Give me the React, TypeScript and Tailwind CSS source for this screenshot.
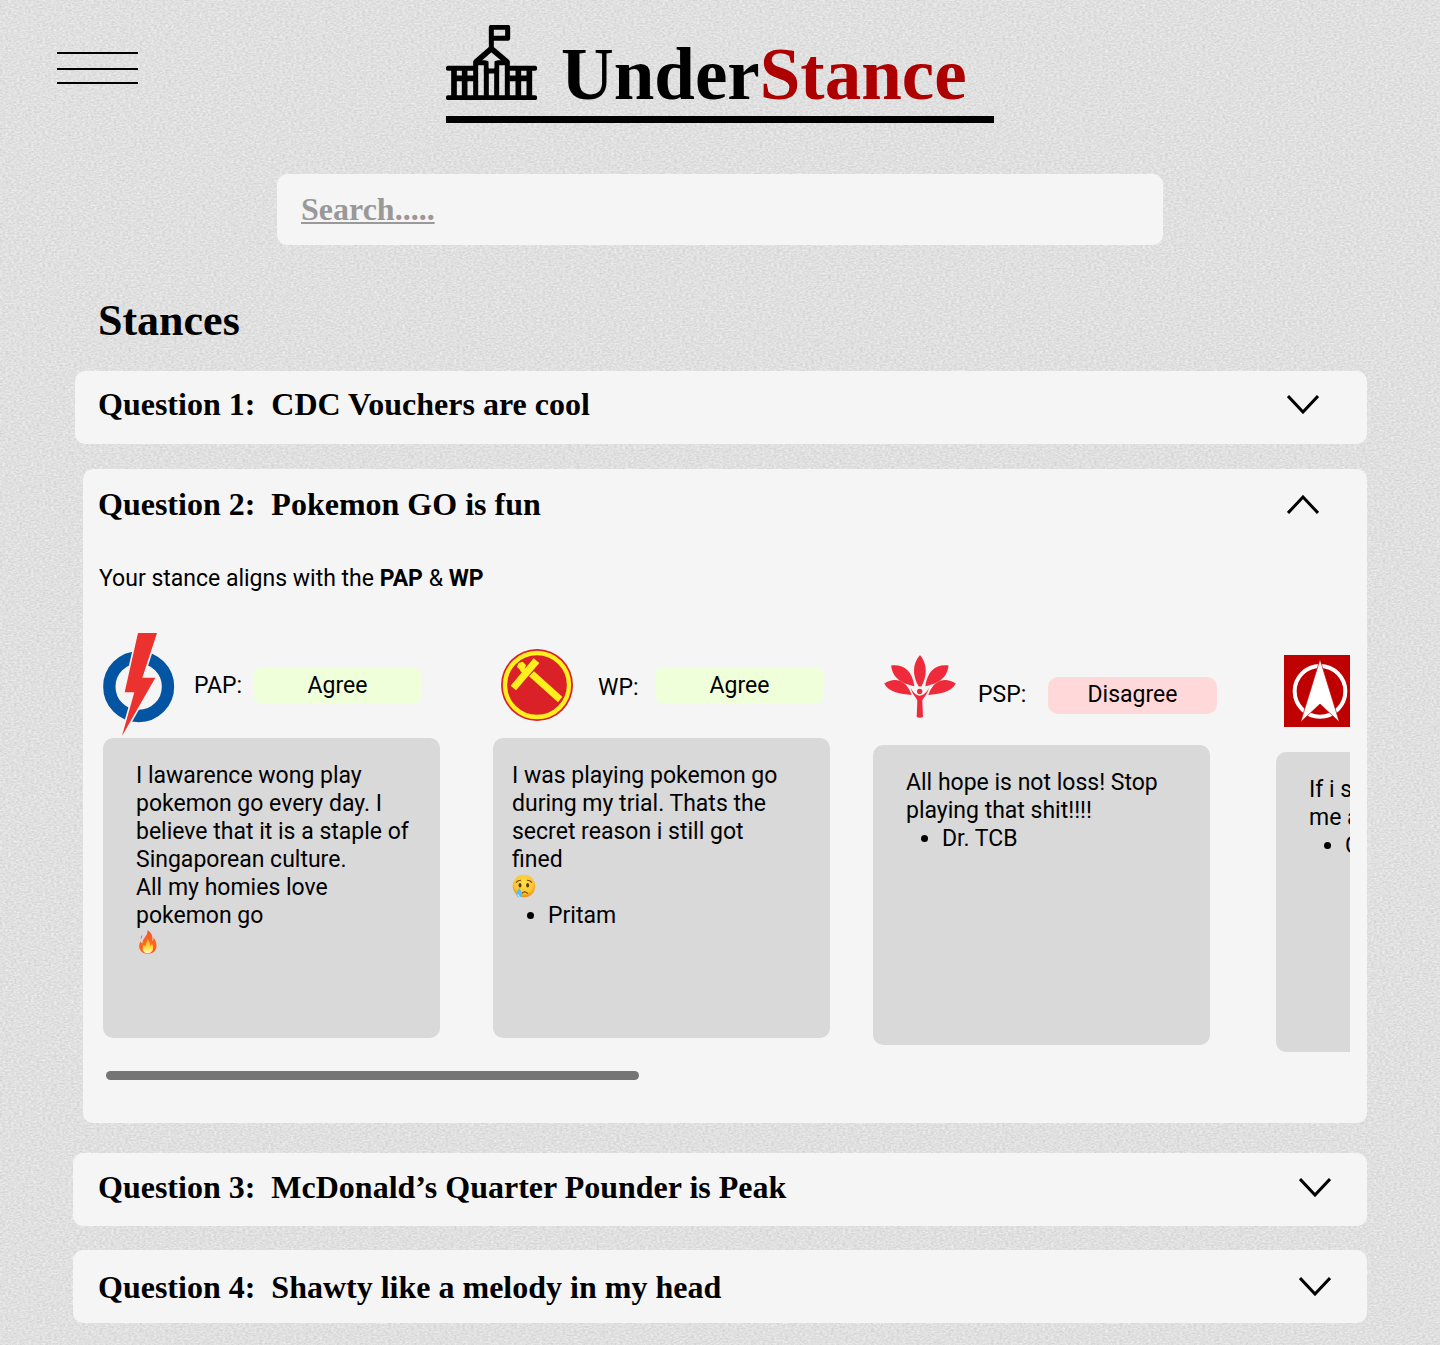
import React, { useState } from "react";

const serif = "font-['Liberation_Serif',serif] font-bold";

function PaperTexture() {
  return (
    <svg className="pointer-events-none absolute inset-0 -z-10 h-full w-full" aria-hidden="true">
      <filter id="weave" x="0" y="0" width="100%" height="100%" colorInterpolationFilters="sRGB">
        <feTurbulence type="fractalNoise" baseFrequency="0.35 0.6" numOctaves="3" seed="4" result="n" />
        <feColorMatrix
          in="n"
          type="matrix"
          values="0.16 0 0 0 0.797  0.16 0 0 0 0.797  0.16 0 0 0 0.797  0 0 0 0 1"
        />
      </filter>
      <rect width="100%" height="100%" filter="url(#weave)" />
    </svg>
  );
}

function ParliamentIcon() {
  return (
    <svg viewBox="48 30 273 225" className="h-[75px] w-[91px]" fill="none" stroke="#000" strokeWidth="15" strokeLinecap="round" strokeLinejoin="round" aria-hidden="true">
      <path d="M184 98V37H233V70H190" />
      <path d="M139 140L184 101L230 140" strokeWidth="17" />
      <path d="M55 160H132M238 160H314M55 248H314" />
      <path d="M72 165V243M104 165V243M265 165V243M298 165V243M78 190H132M238 190H292" strokeLinecap="butt" strokeWidth="17" />
      <path d="M137 143V243M169 143V243M200 143V243M232 143V243M137 143H169M200 143H232" />
      <path d="M169 168H200" strokeWidth="15" />
      <path d="M166 136L184 117L203 136L193 138V158H176V138Z" fill="#e0e0e0" stroke="none" />
    </svg>
  );
}

function Chevron({ up }: { up?: boolean }) {
  return (
    <svg viewBox="0 0 32 19" className="h-[19px] w-8" fill="none" stroke="#000" strokeWidth="3" aria-hidden="true">
      <path d={up ? "M1 18L16 2L31 18" : "M1 1L16 17L31 1"} />
    </svg>
  );
}

function PapLogo() {
  return (
    <svg viewBox="40 24 216 309" className="h-[103px] w-[72px]" role="img" aria-label="PAP logo">
      <circle cx="147" cy="185" r="88" fill="none" stroke="#0354a3" strokeWidth="37" />
      <path d="M145 24H202L158 158H197L97 333L134 202H105Z" fill="#ec322f" stroke="#f5f5f5" strokeWidth="10" />
      <path d="M145 24H202L158 158H197L97 333L134 202H105Z" fill="#ec322f" />
    </svg>
  );
}

function WpLogo() {
  return (
    <svg viewBox="33 27 216 216" className="size-[72px]" role="img" aria-label="WP logo">
      <circle cx="141" cy="135" r="108" fill="#da2128" />
      <circle cx="141" cy="135" r="96" fill="none" stroke="#fff01f" strokeWidth="13" />
      <g fill="#ffef1c">
        <path d="M131 55L148 69L78 151L62 137Z" />
        <path d="M132 94L217 170L204 187L117 109Z" />
        <path d="M86 69L98 65L108 75L104 88L91 91L81 80Z" />
        <path d="M98 82L112 94L103 104L90 92Z" />
      </g>
    </svg>
  );
}

function PspLogo() {
  return (
    <svg viewBox="42 45 216 190" className="h-[63px] w-[72px]" fill="#ee2a3b" role="img" aria-label="PSP logo">
      <path d="M150 45C126 72 127 108 146 140H154C172 108 173 72 150 45Z" />
      <path d="M63 77C98 72 126 90 133 139C100 133 67 118 63 77Z" />
      <path d="M236 77C201 72 173 90 166 139C199 133 232 118 236 77Z" />
      <path d="M42 131C72 112 108 117 125 166C92 162 56 158 42 131Z" />
      <path d="M258 131C228 112 192 117 175 166C208 162 244 158 258 131Z" />
      <circle cx="149" cy="155" r="8" />
      <path d="M122 144C132 163 142 168 149 168C157 168 167 163 177 144C171 169 158 174 157 184L159 232Q149 237 140 232L142 184C141 174 128 169 122 144Z" />
    </svg>
  );
}

function SdpLogo() {
  return (
    <svg viewBox="162 45 216 216" className="size-[72px]" role="img" aria-label="SDP logo">
      <path d="M162 45H378V261H162Z" fill="#bf0000" />
      <circle cx="270" cy="154" r="76" fill="none" stroke="#fff" strokeWidth="12" />
      <path d="M270 58L328 246L270 192L212 246Z" fill="#fff" stroke="#bf0000" strokeWidth="2" />
    </svg>
  );
}

function CryEmoji() {
  return (
    <svg viewBox="0 0 64 66" className="h-6 w-6" role="img" aria-label="Crying face">
      <defs>
        <radialGradient id="face" cx="50%" cy="38%" r="62%">
          <stop offset="0" stopColor="#ffe34a" />
          <stop offset="0.7" stopColor="#fdc52c" />
          <stop offset="1" stopColor="#e88b17" />
        </radialGradient>
      </defs>
      <circle cx="32" cy="33" r="31" fill="url(#face)" />
      <ellipse cx="21" cy="31" rx="4" ry="6" fill="#5f3509" />
      <ellipse cx="42" cy="31" rx="4" ry="6" fill="#5f3509" />
      <path d="M11 23Q15 17 23 17M41 17Q49 17 53 23M26 53Q34 45 42 53" fill="none" stroke="#7a4610" strokeWidth="3" strokeLinecap="round" />
      <path d="M19 38C14 46 10 52 11 57C13 67 26 66 27 56C27 51 23 46 19 38Z" fill="#5bbdf5" />
      <path d="M15 56Q16 62 21 61" fill="none" stroke="#d8f3ff" strokeWidth="3" />
    </svg>
  );
}

function FireEmoji() {
  return (
    <svg viewBox="0 0 54 72" className="ml-[2px] h-6 w-5" role="img" aria-label="Fire">
      <defs>
        <linearGradient id="flame" x1="0" y1="0" x2="0" y2="1">
          <stop offset="0" stopColor="#f2512b" />
          <stop offset="0.55" stopColor="#fb6a1e" />
          <stop offset="1" stopColor="#fb5a1f" />
        </linearGradient>
        <linearGradient id="core" x1="0" y1="0" x2="0" y2="1">
          <stop offset="0" stopColor="#ffa628" />
          <stop offset="0.6" stopColor="#ffdc3e" />
          <stop offset="1" stopColor="#fffbd0" />
        </linearGradient>
      </defs>
      <path d="M25 0C38 7 42 19 40 32C44 30 44 26 43 22C56 37 56 58 43 67C36 73 16 73 8 65C-3 55 0 42 5 34C6 38 8 40 11 40C8 25 29 17 25 0Z" fill="url(#flame)" />
      <path d="M10 14Q4 20 5 29Q10 22 10 14Z" fill="#f2512b" />
      <path d="M25 27C33 34 32 41 34 48C37 46 38 43 38 40C46 52 43 69 27 70C10 70 8 54 15 44C16 47 18 49 20 49C18 41 26 36 25 27Z" fill="url(#core)" />
    </svg>
  );
}

function Pill({ agree }: { agree: boolean }) {
  return (
    <span className={`flex h-[37px] w-[169px] shrink-0 items-center justify-center rounded-[10px] ${agree ? "bg-[#eeffda]" : "bg-[#ffd9d9]"}`}>
      {agree ? "Agree" : "Disagree"}
    </span>
  );
}

function Quote({ className = "px-[33px]", children }: { className?: string; children: React.ReactNode }) {
  return (
    <blockquote className={`h-[300px] w-[337px] rounded-[10px] bg-[#d9d9d9] pt-6 whitespace-nowrap ${className}`}>
      {children}
    </blockquote>
  );
}

function QuestionHeader({ n, title, open, className, onToggle }: { n: number; title: string; open?: boolean; className: string; onToggle: () => void }) {
  return (
    <h2>
      <button type="button" aria-expanded={!!open} onClick={onToggle} className={`flex w-full items-center justify-between text-left text-[32px] leading-9 ${serif} ${className}`}>
        <span className="whitespace-pre-wrap">{`Question ${n}:  ${title}`}</span>
        <Chevron up={open} />
      </button>
    </h2>
  );
}

export default function App() {
  const [open, setOpen] = useState(true);
  const noop = () => {};
  return (
    <div className="relative isolate min-h-screen overflow-hidden bg-[#e0e0e0] pb-[22px] font-[Roboto,sans-serif] text-[23px] leading-7 text-black">
      <PaperTexture />
      <header className="grid grid-cols-[1fr_auto_1fr] items-start px-[57px]">
        <button type="button" aria-label="Menu" className="mt-[52px] flex w-[81px] flex-col">
          <span className="h-[2px] w-full bg-black" />
          <span className="mt-[14px] h-[2px] w-full bg-black" />
          <span className="mt-3 h-[2px] w-full bg-black" />
        </button>
        <a href="#home" className="flex w-[548px] items-end gap-6 border-b-[7px] border-black pt-[25px] pb-4">
          <ParliamentIcon />
          <span className={`-mb-4 text-[73px] leading-[82px] ${serif}`}>
            Under<span className="text-[#ad0000]">Stance</span>
          </span>
        </a>
      </header>

      <main className="px-[73px]">
        <input
          type="search"
          aria-label="Search"
          placeholder="Search....."
          className={`mx-auto mt-[51px] block h-[71px] w-full max-w-[886px] rounded-[10px] bg-[#f5f5f5] px-6 text-[32px] outline-none placeholder:text-[#999999] placeholder:underline placeholder:decoration-2 placeholder:underline-offset-2 ${serif}`}
        />
        <h1 className={`mt-[50px] pl-[25px] text-[44px] leading-[52px] ${serif}`}>Stances</h1>

        <section className="mt-6 ml-[2px] rounded-[10px] bg-[#f5f5f5]">
          <QuestionHeader n={1} title="CDC Vouchers are cool" className="h-[73px] pr-12 pb-[7px] pl-[23px]" onToggle={noop} />
        </section>

        <section className="mt-[25px] ml-[10px] rounded-[10px] bg-[#f5f5f5]">
          <QuestionHeader n={2} title="Pokemon GO is fun" open={open} className="h-[70px] pr-12 pl-[15px]" onToggle={() => setOpen(!open)} />
          {open && (
            <div className="pr-[17px] pb-[43px] pl-5">
              <p className="-ml-1 pt-[26px]">
                Your stance aligns with the <b>PAP</b> &amp; <b>WP</b>
              </p>
              <div className="mt-10 flex items-start overflow-hidden">
                <article className="mr-[53px] w-[337px] shrink-0">
                  <header className="flex h-[105px] items-center">
                    <div className="mb-[2px]"><PapLogo /></div>
                    <h3 className="ml-[19px] w-[59px]">PAP:</h3>
                    <Pill agree />
                  </header>
                  <Quote>
                    <p>
                      I lawarence wong play<br />pokemon go every day. I<br />believe that it is a staple of<br />Singaporean culture.<br />All my homies love<br />pokemon go
                    </p>
                    <FireEmoji />
                  </Quote>
                </article>
                <article className="mr-[43px] w-[337px] shrink-0">
                  <header className="flex h-[105px] items-center pl-2">
                    <div className="mb-[2px]"><WpLogo /></div>
                    <h3 className="ml-[25px] w-[57px] pt-1">WP:</h3>
                    <Pill agree />
                  </header>
                  <Quote className="px-[19px]">
                    <p>
                      I was playing pokemon go<br />during my trial. Thats the<br />secret reason i still got<br />fined
                    </p>
                    <div className="h-7"><CryEmoji /></div>
                    <ul className="list-disc pl-9"><li>Pritam</li></ul>
                  </Quote>
                </article>
                <article className="mr-[66px] w-[337px] shrink-0">
                  <header className="flex h-28 items-center pt-3 pl-[11px]">
                    <div className="mb-[18px]"><PspLogo /></div>
                    <h3 className="ml-[22px] w-[70px] shrink-0">PSP:</h3>
                    <Pill agree={false} />
                  </header>
                  <Quote>
                    <p>All hope is not loss! Stop<br />playing that shit!!!!</p>
                    <ul className="list-disc pl-9"><li>Dr. TCB</li></ul>
                  </Quote>
                </article>
                <article className="w-[337px] shrink-0">
                  <header className="flex h-[119px] items-center pb-1 pl-2">
                    <SdpLogo />
                  </header>
                  <Quote>
                    <p>If i say<br />me and</p>
                    <ul className="list-disc pl-9"><li>CSJ</li></ul>
                  </Quote>
                </article>
              </div>
              <div className="mt-[19px] ml-[3px] h-[9px] w-[533px] rounded-full bg-[#757575]" />
            </div>
          )}
        </section>

        <section className="mt-[30px] rounded-[10px] bg-[#f5f5f5]">
          <QuestionHeader n={3} title="McDonald’s Quarter Pounder is Peak" className="h-[73px] pr-9 pb-[5px] pl-[25px]" onToggle={noop} />
        </section>
        <section className="mt-6 rounded-[10px] bg-[#f5f5f5]">
          <QuestionHeader n={4} title="Shawty like a melody in my head" className="h-[73px] pr-9 pl-[25px]" onToggle={noop} />
        </section>
      </main>
    </div>
  );
}
